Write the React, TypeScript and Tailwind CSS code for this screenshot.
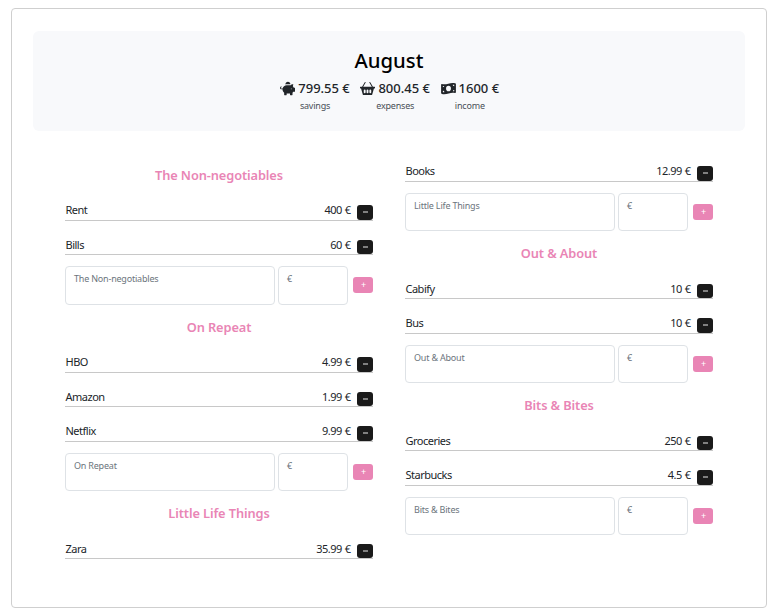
import type { ReactNode } from "react";
import { FaPiggyBank } from "react-icons/fa";
import { BsBasket2Fill } from "react-icons/bs";

type Entry = { name: string; price: string };

function BanknoteIcon() {
  return (
    <svg viewBox="0 0 16 16" width="15" height="15" fill="currentColor">
      <path
        fillRule="evenodd"
        d="M1 3.2C5.5 4.6 9.8 1 15 2.3c.6.1.9.5.9 1v8.8c0 .6-.5.9-1 .8-4.500-1.300-8.800 2.200-13.900.9-.6-.1-.9-.5-.9-1V4c0-.6.4-.9.900-.8ZM8 5a2.600 3 0 1 0 0 6 2.600 3 0 0 0 0-6ZM2 5.200v1.400c.8 0 1.400-.6 1.400-1.300ZM14.100 4.100c-.7-.1-1.300-.1-1.600 0 0 .8.700 1.400 1.600 1.400ZM2 10.500v1.400c.6.1 1.100.1 1.600.1 0-.8-.7-1.500-1.600-1.500ZM14.100 9.500c-.8 0-1.400.6-1.400 1.300l1.400.1Z"
      />
    </svg>
  );
}

function Stat({ icon, value, label }: { icon: ReactNode; value: string; label: string }) {
  return (
    <div className="flex flex-col items-center">
      <div className="flex h-[18px] items-center gap-[3px] text-[13px] leading-[18px] font-medium text-[#212529]">
        <span className="text-[15px]">{icon}</span>
        <span>{value}</span>
      </div>
      <div className="pt-px text-[9px] leading-4 tracking-[-0.2px] text-[#495057]">{label}</div>
    </div>
  );
}

function Title({ children }: { children: string }) {
  return (
    <h2 className="h-[23.2px] pt-[0.7px] text-center text-[12.8px] leading-[23px] font-semibold tracking-[-0.1px] text-[#e985b5]">
      {children}
    </h2>
  );
}

function Row({ name, price }: Entry) {
  return (
    <div className="flex h-[34.4px] items-end border-b border-[#c8c8c8] text-[11px] leading-[19.4px] tracking-[-0.5px] text-[#212529] [word-spacing:0.5px]">
      <span className="flex-1 pl-[0.5px]">{name}</span>
      <span>{price}</span>
      <button className="ml-[6.500px] flex h-[14.5px] w-4 justify-center rounded-[3px] bg-[#1a1a1a] pt-[6px]" aria-label="remove">
        <span className="h-[2px] w-[5px] bg-[#808080]" />
      </button>
    </div>
  );
}

function AddForm({ label }: { label: string }) {
  return (
    <div className="flex h-[60px] items-center pt-[0.4px]">
      <div className="h-[38.4px] w-[210px] rounded border border-[#dee2e6] px-2 pt-1 text-[9px] leading-4 tracking-[-0.2px] text-[#6c757d]">
        {label}
      </div>
      <div className="ml-[3px] h-[38.4px] w-[70px] rounded border border-[#dee2e6] px-2 pt-1 text-[9px] leading-4 text-[#6c757d]">
        €
      </div>
      <button className="ml-[5px] h-4 w-5 rounded-[3px] bg-[#e985b5] pl-px text-center text-[9px] leading-[14px] text-white">
        +
      </button>
    </div>
  );
}

function Section({ title, rows }: { title: string; rows: Entry[] }) {
  return (
    <section>
      <Title>{title}</Title>
      {rows.map((r) => (
        <Row key={r.name} {...r} />
      ))}
      <AddForm label={title} />
    </section>
  );
}

export default function App() {
  return (
    <div className="h-[615px] bg-white pt-2 pl-[11px] font-['Noto_Sans',sans-serif]">
      <main className="h-[600px] w-[756px] rounded border border-[#cfcfcf] px-[21px] pt-[22px]">
        <header className="h-[99.5px] rounded-md bg-[#f8f9fb] pt-[15px]">
          <h1 className="text-center text-[20.3px] leading-[28px] font-medium text-black">August</h1>
          <div className="mt-[5px] flex justify-center gap-[10.6px] pl-[1.4px]">
            <Stat icon={<FaPiggyBank />} value="799.55 €" label="savings" />
            <Stat icon={<BsBasket2Fill />} value="800.45 €" label="expenses" />
            <Stat icon={<BanknoteIcon />} value="1600 €" label="income" />
          </div>
        </header>
        <div className="flex gap-8 px-8">
          <div className="w-[308px] pt-[32.8px]">
            <Section title="The Non-negotiables" rows={[{ name: "Rent", price: "400 €" }, { name: "Bills", price: "60 €" }]} />
            <Section
              title="On Repeat"
              rows={[
                { name: "HBO", price: "4.99 €" },
                { name: "Amazon", price: "1.99 €" },
                { name: "Netflix", price: "9.99 €" },
              ]}
            />
            <Title>Little Life Things</Title>
            <Row name="Zara" price="35.99 €" />
          </div>
          <div className="w-[308px] pt-[16.8px]">
            <Row name="Books" price="12.99 €" />
            <AddForm label="Little Life Things" />
            <Section title="Out & About" rows={[{ name: "Cabify", price: "10 €" }, { name: "Bus", price: "10 €" }]} />
            <Section title="Bits & Bites" rows={[{ name: "Groceries", price: "250 €" }, { name: "Starbucks", price: "4.5 €" }]} />
          </div>
        </div>
      </main>
    </div>
  );
}
